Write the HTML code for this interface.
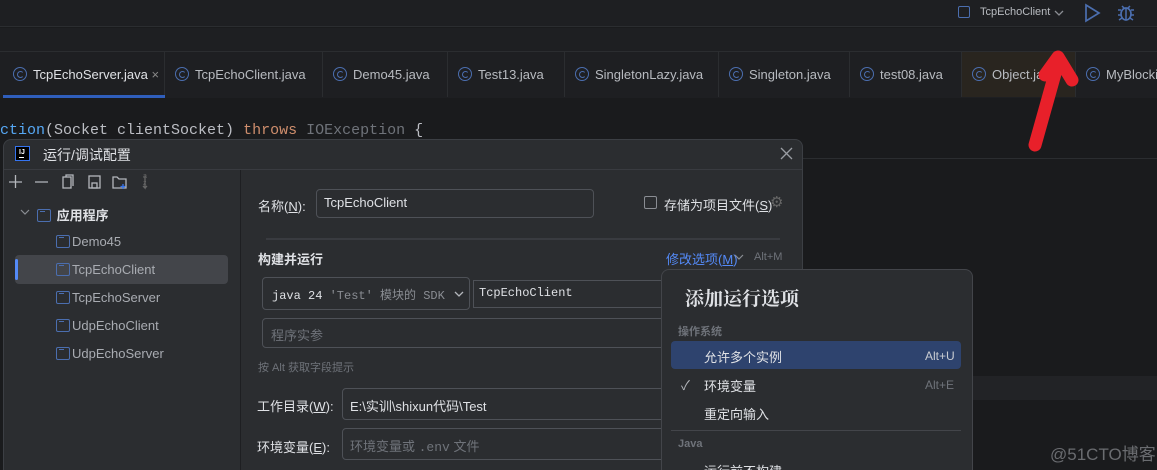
<!DOCTYPE html>
<html style="width:1157px;height:470px;overflow:hidden"><head><meta charset="utf-8"><style>
*{margin:0;padding:0;box-sizing:border-box}
body{width:1157px;height:470px;overflow:hidden;background:#1a1b1d;font-family:"Liberation Sans","Noto Sans CJK SC",sans-serif;color:#c9ccd2;position:relative;font-size:13px}
.a{position:absolute;white-space:nowrap}
.mono{font-family:"Liberation Mono","Noto Sans CJK SC",monospace}
.tab{position:absolute;top:52px;height:45px;border-right:1px solid #2b2d30;color:#b8bbc0;font-size:13px;line-height:45px;padding-left:10px;white-space:nowrap;overflow:hidden}
.ic{display:inline-block;width:14px;height:14px;border:1.5px solid #4b6eaf;border-radius:50%;vertical-align:-2px;margin-right:6px;position:relative}
.ic:after{content:"";position:absolute;left:3px;top:3px;width:5px;height:5px;border:1.5px solid #4b6eaf;border-right-color:transparent;border-radius:50%}
.inp{position:absolute;border:1px solid #4e5157;border-radius:4px;background:#2b2d30}
.fi{display:inline-block;width:14px;height:13px;border:1.5px solid #4b6eaf;border-radius:2px;vertical-align:-2px;margin-right:2px;position:relative}
.fi:after{content:"";position:absolute;left:2px;top:1px;width:5px;height:1px;background:#4b6eaf}
.lbl{color:#dfe1e5;font-size:13px}
</style></head><body>
<div class="a" style="left:0;top:0;width:1157px;height:27px;background:#1e1f22;border-bottom:1px solid #2b2d30"></div>
<div class="a" style="left:0;top:28px;width:1157px;height:24px;background:#1e1f22;border-bottom:1px solid #2b2d30"></div>
<div class="a" style="left:958px;top:6px;width:12px;height:12px;border:1.5px solid #4b6eaf;border-radius:2px"></div>
<div class="a" style="left:980px;top:6px;font-size:11px;color:#b8bbc0">TcpEchoClient</div>
<svg class="a" style="left:1053px;top:8px" width="12" height="10"><path d="M2 3l4 4 4-4" stroke="#8a8d93" fill="none" stroke-width="1.3"/></svg>
<svg class="a" style="left:1083px;top:3px" width="20" height="20"><path d="M3 2l13 8-13 8z" stroke="#4b6eaf" fill="none" stroke-width="1.7"/></svg>
<svg class="a" style="left:1116px;top:3px" width="20" height="20"><ellipse cx="10" cy="11" rx="5" ry="6" stroke="#4b6eaf" fill="none" stroke-width="1.7"/><path d="M10 5v12M2 7h3M15 7h3M2 12h3M15 12h3M3 17l3-2M17 17l-3-2M6 3l2 2M14 3l-2 2" stroke="#4b6eaf" stroke-width="1.5"/></svg>
<div class="a" style="left:0;top:52px;width:1157px;height:46px;background:#1e1f22"></div>
<div class="tab" style="left:3px;width:162px;color:#dfe1e5"><span class="ic"></span>TcpEchoServer.java <span style="color:#888">×</span></div>
<div class="a" style="left:3px;top:95px;width:162px;height:3px;background:#3574f0;opacity:.75"></div>
<div class="tab" style="left:165px;width:158px"><span class="ic"></span>TcpEchoClient.java</div>
<div class="tab" style="left:323px;width:125px"><span class="ic"></span>Demo45.java</div>
<div class="tab" style="left:448px;width:117px"><span class="ic"></span>Test13.java</div>
<div class="tab" style="left:565px;width:154px"><span class="ic"></span>SingletonLazy.java</div>
<div class="tab" style="left:719px;width:131px"><span class="ic"></span>Singleton.java</div>
<div class="tab" style="left:850px;width:112px"><span class="ic"></span>test08.java</div>
<div class="tab" style="left:962px;width:114px;background:#29251f"><span class="ic"></span>Object.java</div>
<div class="tab" style="left:1076px;width:81px;border:none"><span class="ic"></span>MyBlocking</div>
<div class="a mono" style="left:0;top:122px;font-size:15px;color:#bcbec4"><span style="color:#56a8f5">ction</span>(Socket clientSocket) <span style="color:#cf8e6d">throws</span> <span style="color:#6f737a">IOException</span> {</div>
<div class="a" style="left:803px;top:158px;width:354px;height:1px;background:#2b2d30"></div>
<div class="a" style="left:973px;top:376px;width:184px;height:24px;background:#222326"></div>
<div class="a" style="left:1050px;top:440px;font-size:17px;color:#6a6c70">@51CTO博客</div>
<div class="a" style="left:3px;top:139px;width:800px;height:331px;background:#2b2d30;border:1px solid #3c3f44;border-bottom:none;border-radius:8px 8px 0 0"></div>
<div class="a" style="left:4px;top:169px;width:798px;height:1px;background:#393b40"></div>
<div class="a" style="left:240px;top:170px;width:1px;height:300px;background:#1e1f22"></div>
<div class="a" style="left:15px;top:146px;width:15px;height:15px;background:#000;border:1px solid #3574f0"><div style="position:absolute;left:3px;top:2px;font-size:7px;color:#fff;font-weight:bold">IJ</div><div style="position:absolute;left:3px;top:10px;width:5px;height:1px;background:#fff"></div></div>
<div class="a lbl" style="left:43px;top:145px;font-size:14px">运行/调试配置</div>
<svg class="a" style="left:780px;top:147px" width="13" height="13"><path d="M1 1l11 11M12 1L1 12" stroke="#9a9da3" stroke-width="1.3"/></svg>
<svg class="a" style="left:8px;top:174px" width="150" height="16" fill="none" stroke="#b4b7bc" stroke-width="1.3"><path d="M1 8h13M7.5 1v13M27 8h13"/><rect x="55" y="3" width="8" height="11"/><path d="M58 3V1h7v11"/><rect x="81" y="2" width="11" height="12"/><rect x="84" y="9" width="5" height="5"/><path d="M105 3h4l2 2h7v9h-13z"/><path d="M115 10v5M112.5 12.5h5" stroke="#3574f0"/><path d="M137 2v12l-2-2M137 14l2-2" stroke="#666"/></svg>
<div class="a" style="left:143px;top:173px;font-size:7px;color:#666;line-height:7px">a<br>z</div>
<svg class="a" style="left:20px;top:208px" width="10" height="8"><path d="M1 2l4 4 4-4" stroke="#8a8d93" fill="none" stroke-width="1.2"/></svg>
<div class="a lbl" style="left:37px;top:205px;font-weight:bold"><span class="fi"></span> 应用程序</div>
<div class="a" style="left:15px;top:255px;width:213px;height:29px;background:#43454a;border-radius:4px"></div>
<div class="a" style="left:15px;top:259px;width:3px;height:21px;background:#548af7;border-radius:2px"></div>
<div class="a" style="left:56px;top:234px;color:#a9acb2"><span class="fi"></span>Demo45</div>
<div class="a" style="left:56px;top:262px;color:#a9acb2"><span class="fi"></span>TcpEchoClient</div>
<div class="a" style="left:56px;top:290px;color:#a9acb2"><span class="fi"></span>TcpEchoServer</div>
<div class="a" style="left:56px;top:318px;color:#a9acb2"><span class="fi"></span>UdpEchoClient</div>
<div class="a" style="left:56px;top:346px;color:#a9acb2"><span class="fi"></span>UdpEchoServer</div>
<div class="a lbl" style="left:258px;top:196px">名称(<u>N</u>):</div>
<div class="inp" style="left:316px;top:189px;width:278px;height:29px"></div>
<div class="a lbl" style="left:324px;top:195px">TcpEchoClient</div>
<div class="a" style="left:644px;top:196px;width:13px;height:13px;border:1.5px solid #8a8d93;border-radius:2px"></div>
<div class="a lbl" style="left:664px;top:195px">存储为项目文件(<u>S</u>)</div>
<div class="a" style="left:770px;top:193px;color:#666;font-size:15px">⚙</div>
<div class="a" style="left:266px;top:238px;width:514px;height:2px;background:#393b40"></div>
<div class="a lbl" style="left:258px;top:249px;font-weight:bold">构建并运行</div>
<div class="a" style="left:666px;top:249px;color:#548af7">修改选项(<u>M</u>)</div>
<svg class="a" style="left:734px;top:253px" width="10" height="8"><path d="M1 2l4 4 4-4" stroke="#8a8d93" fill="none" stroke-width="1.2"/></svg>
<div class="a" style="left:754px;top:251px;color:#6f737a;font-size:11px">Alt+M</div>
<div class="inp" style="left:262px;top:277px;width:208px;height:33px"></div>
<div class="a mono" style="left:272px;top:286px;font-size:12px;color:#dfe1e5">java 24 <span style="color:#8a8d93">'Test' 模块的 SDK</span></div>
<svg class="a" style="left:454px;top:290px" width="10" height="8"><path d="M1 2l4 4 4-4" stroke="#b4b7bc" fill="none" stroke-width="1.3"/></svg>
<div class="inp" style="left:473px;top:280px;width:200px;height:28px;border-radius:0"></div>
<div class="a mono" style="left:479px;top:286px;font-size:12px;color:#dfe1e5">TcpEchoClient</div>
<div class="inp" style="left:262px;top:318px;width:410px;height:30px"></div>
<div class="a" style="left:271px;top:325px;color:#6f737a">程序实参</div>
<div class="a" style="left:258px;top:359px;color:#6f737a;font-size:11px">按 Alt 获取字段提示</div>
<div class="a lbl" style="left:257px;top:396px">工作目录(<u>W</u>):</div>
<div class="inp" style="left:342px;top:388px;width:330px;height:32px"></div>
<div class="a lbl" style="left:350px;top:396px">E:\实训\shixun代码\Test</div>
<div class="a lbl" style="left:257px;top:437px">环境变量(<u>E</u>):</div>
<div class="inp" style="left:342px;top:428px;width:330px;height:32px"></div>
<div class="a" style="left:350px;top:436px;color:#6f737a">环境变量或 <span class="mono">.env</span> 文件</div>
<div class="a" style="left:661px;top:269px;width:312px;height:201px;background:#2b2d30;border:1px solid #43454a;border-bottom:none;border-radius:8px 8px 0 0;overflow:hidden">
<div class="a" style="left:42px;top:191px;color:#dfe1e5">运行前不构建</div>
</div>
<div class="a" style="left:685px;top:284px;font-family:'Noto Serif CJK SC',serif;font-size:19px;font-weight:bold;color:#dfe1e5">添加运行选项</div>
<div class="a" style="left:678px;top:323px;font-size:11px;color:#6f737a;font-weight:bold">操作系统</div>
<div class="a" style="left:671px;top:341px;width:290px;height:28px;background:#2e436e;border-radius:4px"></div>
<div class="a lbl" style="left:704px;top:347px">允许多个实例</div>
<div class="a" style="left:925px;top:349px;font-size:12px;color:#c9ccd2">Alt+U</div>
<div class="a" style="left:681px;top:375px;color:#b4b7bc">✓</div>
<div class="a lbl" style="left:704px;top:376px">环境变量</div>
<div class="a" style="left:925px;top:378px;font-size:12px;color:#6f737a">Alt+E</div>
<div class="a lbl" style="left:704px;top:404px">重定向输入</div>
<div class="a" style="left:671px;top:430px;width:290px;height:1px;background:#43454a"></div>
<div class="a" style="left:678px;top:438px;font-size:11px;color:#6f737a;font-weight:bold">Java</div>
<svg class="a" style="left:1000px;top:45px" width="90" height="110"><path d="M35 100L58 18M45 30L58 12L72 35" stroke="#e8202a" stroke-width="13" fill="none" stroke-linecap="round" stroke-linejoin="round"/></svg>
</body></html>
